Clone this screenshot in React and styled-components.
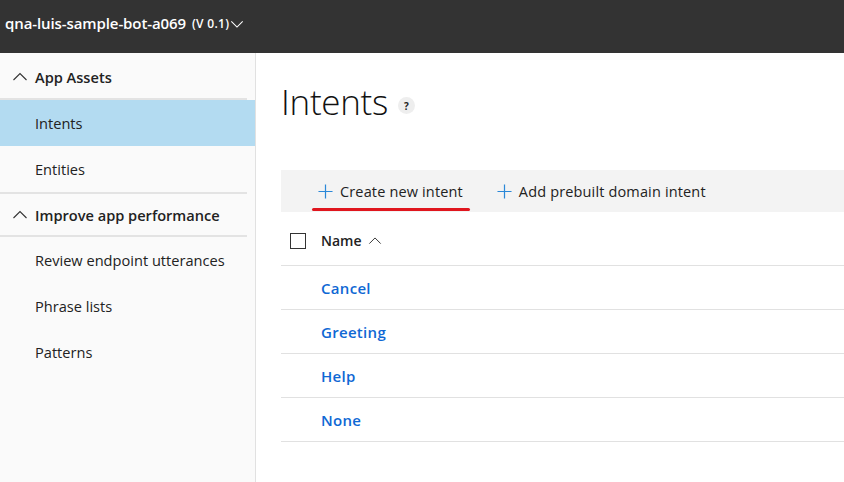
import React from 'react'
import styled, {createGlobalStyle} from 'styled-components'

const GlobalStyle = createGlobalStyle`
html, body {
    margin: 0;
    padding: 0;
    height: 100%;
    overflow: hidden;
}
body {
    font-family: "Segoe UI", "Open Sans", "Noto Sans", sans-serif;
    background: #ffffff;
}
#root {
    height: 100%;
}
`

const ChevronUp = ({size = 16, color = '#333'}) => (
    <svg width={size} height={size} viewBox="0 0 16 16" fill="none">
        <path d="M1.5 11 L8 4.5 L14.5 11" stroke={color} strokeWidth="1.1" />
    </svg>
)

const ChevronDown = ({size = 14, color = '#fff'}) => (
    <svg width={size} height={size} viewBox="0 0 16 16" fill="none">
        <path d="M1.5 5 L8 11.5 L14.5 5" stroke={color} strokeWidth="1.2" />
    </svg>
)

const Plus = () => (
    <svg width="15" height="15" viewBox="0 0 16 16" fill="none">
        <path d="M8 0.5 V15.5 M0.5 8 H15.5" stroke="#2b88d8" strokeWidth="1.3" />
    </svg>
)

const intents = ['Cancel', 'Greeting', 'Help', 'None']

const App = () => {
    return (
        <Page>
            <GlobalStyle/>
            <TopBar>
                <AppName>qna-luis-sample-bot-a069</AppName>
                <Version>(V 0.1)</Version>
                <ChevronDown/>
            </TopBar>
            <Body>
                <Sidebar>
                    <GroupHeader>
                        <ChevronUp/>
                        <span>App Assets</span>
                    </GroupHeader>
                    <NavItem active>Intents</NavItem>
                    <NavItem>Entities</NavItem>
                    <GroupHeader divided>
                        <ChevronUp/>
                        <span>Improve app performance</span>
                    </GroupHeader>
                    <NavItem>Review endpoint utterances</NavItem>
                    <NavItem>Phrase lists</NavItem>
                    <NavItem>Patterns</NavItem>
                </Sidebar>
                <Main>
                    <TitleRow>
                        <Title>Intents</Title>
                        <HelpBadge>?</HelpBadge>
                    </TitleRow>
                    <CommandBar>
                        <Command underlined>
                            <Plus/>
                            <span>Create new intent</span>
                        </Command>
                        <Command>
                            <Plus/>
                            <span>Add prebuilt domain intent</span>
                        </Command>
                    </CommandBar>
                    <HeaderRow>
                        <Checkbox/>
                        <ColumnName>Name</ColumnName>
                        <ChevronUp size={14} color="#333"/>
                    </HeaderRow>
                    {intents.map((name)=>(
                        <IntentRow key={name}>
                            <IntentLink>{name}</IntentLink>
                        </IntentRow>
                    ))}
                </Main>
            </Body>
        </Page>
    )
}

const Page = styled.div`
height: 100%;
display: flex;
flex-direction: column;
`

const TopBar = styled.div`
height: 53px;
flex-shrink: 0;
background: #333333;
display: flex;
align-items: center;
padding-left: 5px;
padding-bottom: 8px;
box-sizing: border-box;
color: #ffffff;
svg {
    margin-left: 1px;
    margin-top: 2px;
}
`

const AppName = styled.span`
font-size: 15px;
font-weight: 600;
letter-spacing: -0.1px;
`

const Version = styled.span`
font-size: 12px;
font-weight: 600;
margin-left: 6px;
margin-top: 2px;
letter-spacing: 0.3px;
`

const Body = styled.div`
flex: 1;
display: flex;
min-height: 0;
`

const Sidebar = styled.div`
width: 256px;
flex-shrink: 0;
background: #fafafa;
border-right: 1px solid #e1e1e1;
padding-top: 2px;
box-sizing: border-box;
`

const GroupHeader = styled.div`
height: 45px;
display: flex;
align-items: center;
gap: 7px;
padding-left: 12px;
font-size: 14.6px;
font-weight: 600;
color: #222;
width: 247px;
box-sizing: border-box;
border-bottom: 2px solid #e3e3e3;
border-top: ${props => props.divided ? '2px solid #e3e3e3' : 'none'};
`

const NavItem = styled.div`
height: 46px;
display: flex;
align-items: center;
padding-left: 35px;
font-size: 14.6px;
color: #222;
background: ${props => props.active ? '#b3dbf1' : 'transparent'};
`

const Main = styled.div`
flex: 1;
padding-left: 25px;
min-width: 0;
`

const TitleRow = styled.div`
height: 117px;
display: flex;
align-items: center;
padding-bottom: 20px;
box-sizing: border-box;
`

const Title = styled.h1`
margin: 0;
font-size: 35px;
font-weight: 300;
color: #111;
letter-spacing: -0.3px;
`

const HelpBadge = styled.div`
width: 17px;
height: 17px;
border-radius: 50%;
background: #eeeeee;
color: #222;
font-size: 10px;
font-weight: 700;
display: flex;
align-items: center;
justify-content: center;
margin-left: 10px;
margin-top: 8px;
`

const CommandBar = styled.div`
height: 42px;
background: #f3f3f3;
display: flex;
align-items: center;
padding-left: 37px;
gap: 34px;
`

const Command = styled.div`
position: relative;
display: flex;
align-items: center;
gap: 7px;
font-size: 14.5px;
color: #222;
letter-spacing: 0.15px;
&::after {
    content: '';
    display: ${props => props.underlined ? 'block' : 'none'};
    position: absolute;
    left: -6px;
    right: -7px;
    bottom: -10px;
    height: 3px;
    border-radius: 2px;
    background: #e0161e;
}
`

const HeaderRow = styled.div`
height: 54px;
display: flex;
align-items: center;
border-bottom: 1px solid #e1e1e1;
padding-left: 9px;
padding-top: 4px;
box-sizing: border-box;
svg {
    margin-left: 6px;
}
`

const Checkbox = styled.div`
width: 14px;
height: 14px;
border: 1.5px solid #333;
margin-right: 15px;
`

const ColumnName = styled.span`
font-size: 14px;
font-weight: 600;
color: #222;
`

const IntentRow = styled.div`
height: 43px;
display: flex;
align-items: center;
padding-left: 40px;
border-bottom: 1px solid #e1e1e1;
`

const IntentLink = styled.a`
font-size: 15px;
font-weight: 600;
color: #0f68d4;
letter-spacing: 0.3px;
cursor: pointer;
`

export default App
